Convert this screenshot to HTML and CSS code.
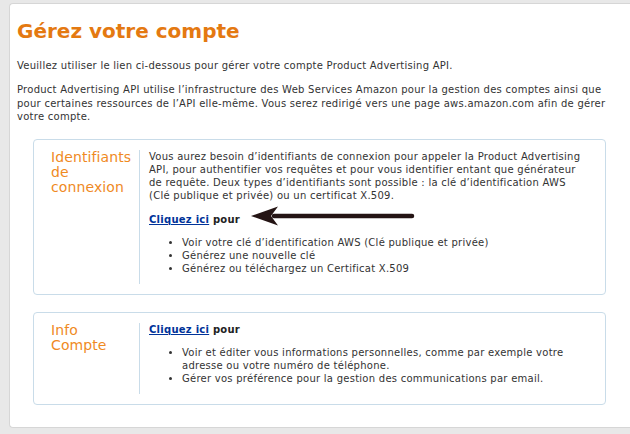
FILE: index.html
```html
<!DOCTYPE html>
<html lang="fr">
<head>
<meta charset="utf-8">
<link rel="stylesheet" href="styles.css">
</head>
<body>
<div class="page">
  <h1 class="title">Gérez votre compte</h1>
  <p class="intro">Veuillez utiliser le lien ci-dessous pour gérer votre compte Product Advertising API.</p>
  <p class="intro intro-last">Product Advertising API utilise l’infrastructure des Web Services Amazon pour la gestion des comptes ainsi que pour certaines ressources de l’API elle-même. Vous serez redirigé vers une page aws.amazon.com afin de gérer votre compte.</p>

  <div class="box">
    <div class="label">Identifiants de connexion</div>
    <div class="content">
      <p class="desc">Vous aurez besoin d’identifiants de connexion pour appeler la Product Advertising API, pour authentifier vos requêtes et pour vous identifier entant que générateur de requête. Deux types d’identifiants sont possible : la clé d’identification AWS (Clé publique et privée) ou un certificat X.509.</p>
      <p class="action"><a href="#">Cliquez ici</a> pour</p>
      <ul class="list">
        <li>Voir votre clé d’identification AWS (Clé publique et privée)</li>
        <li>Générez une nouvelle clé</li>
        <li>Générez ou téléchargez un Certificat X.509</li>
      </ul>
    </div>
    <svg class="arrow" width="166" height="22" viewBox="0 0 166 22">
      <path d="M24 11 H162" stroke="#241414" stroke-width="4.5" stroke-linecap="round" fill="none"/>
      <path d="M1 11 L28 1.5 L21 11 L28 20.5 Z" fill="#241414"/>
    </svg>
  </div>

  <div class="box">
    <div class="label">Info<br>Compte</div>
    <div class="content">
      <p class="action"><a href="#">Cliquez ici</a> pour</p>
      <ul class="list">
        <li>Voir et éditer vous informations personnelles, comme par exemple votre adresse ou votre numéro de téléphone.</li>
        <li>Gérer vos préférence pour la gestion des communications par email.</li>
      </ul>
    </div>
  </div>
</div>
</body>
</html>
```
FILE: styles.css
```css
html, body {
  margin: 0;
  padding: 0;
}
body {
  background: #e8e8e8;
  font-family: "DejaVu Sans", Verdana, sans-serif;
  font-size: 10px;
  letter-spacing: 0.26px;
  color: #333;
}
.page {
  margin: 3px 0 0 9px;
  height: 425px;
  box-sizing: border-box;
  background: #fff;
  border: 1px solid #d6d6d6;
  border-right: none;
  border-radius: 4px 0 0 4px;
  padding: 13px 14px 0 7px;
}
.title {
  margin: 0 0 14px;
  font-size: 20px;
  letter-spacing: 0;
  font-weight: bold;
  color: #e47911;
  line-height: 28px;
}
.intro {
  margin: 0 0 10.5px;
  line-height: 13.5px;
}
.intro-last {
  margin-bottom: 15px;
}
.box {
  position: relative;
  display: flex;
  margin: 0 10px 17px 16px;
  border: 1px solid #c9dce9;
  border-radius: 4px;
  padding: 10px 0;
}
.label {
  width: 88px;
  padding: 0 0 0 17px;
  border-right: 1px solid #c9dce9;
  color: #ef8a1f;
  font-size: 14px;
  letter-spacing: 0.1px;
  line-height: 15px;
}
.content {
  flex: 1;
  padding: 0 20px 0 9px;
}
.desc {
  margin: 0 0 11px;
  line-height: 13px;
}
.action {
  margin: 0;
  font-weight: bold;
  color: #222;
  line-height: 13px;
}
.action a {
  color: #003399;
}
.list {
  margin: 10px 0 9px;
  padding-left: 33px;
  line-height: 13px;
}
.arrow {
  position: absolute;
  left: 216px;
  top: 65px;
}
```
